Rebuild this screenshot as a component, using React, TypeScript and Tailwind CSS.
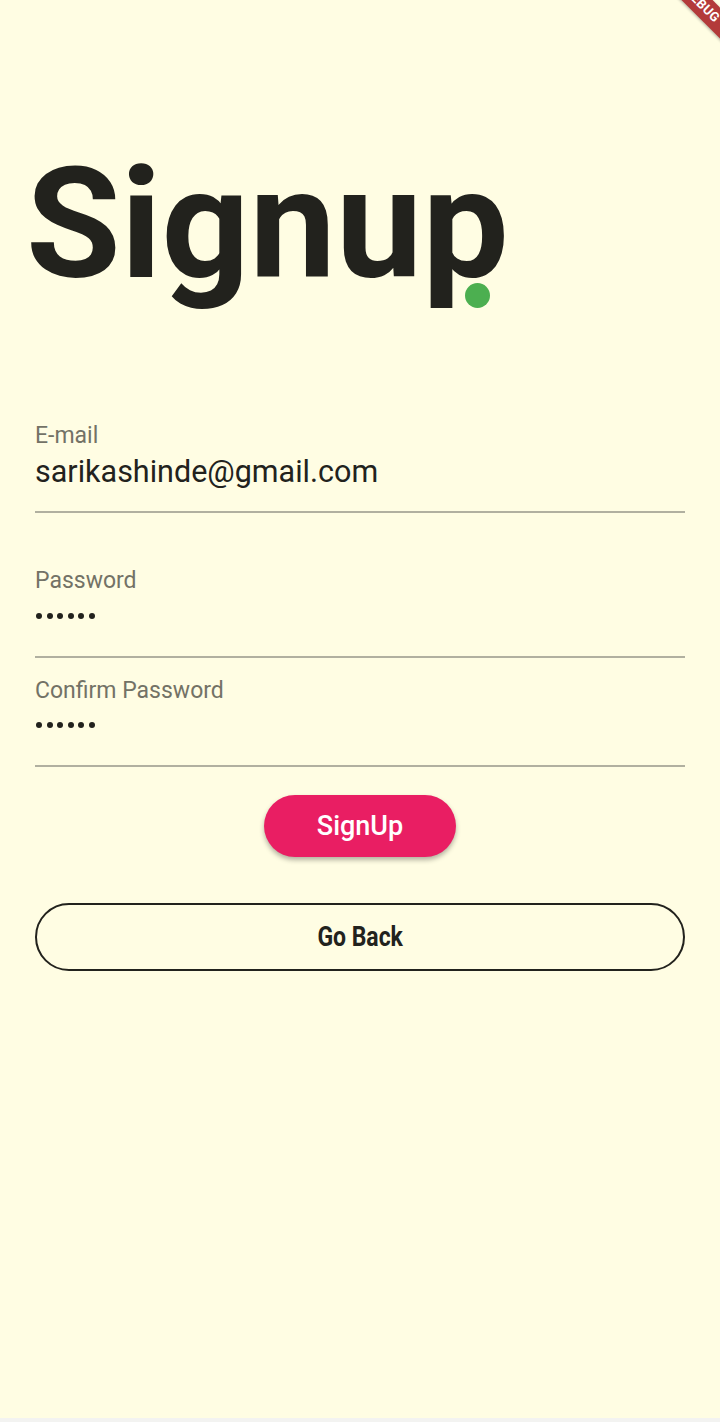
import React from "react";

function Label({ children }: { children: React.ReactNode }) {
  return <div className="text-[23px] leading-[28px] text-[#737266]">{children}</div>;
}

function Dots({ className }: { className: string }) {
  return (
    <div className={`flex gap-[4.5px] pl-[1px] ${className}`}>
      {Array.from({ length: 6 }).map((_, i) => (
        <span key={i} className="block w-[6px] h-[6px] rounded-full bg-[#22221d]" />
      ))}
    </div>
  );
}

function Line({ className }: { className: string }) {
  return <div className={`h-[2px] bg-[#b1b0a0] ${className}`} />;
}

export default function App() {
  return (
    <div
      className="relative w-[720px] h-[1422px] overflow-hidden bg-[#f3f3f1]"
      style={{ fontFamily: "Roboto, 'Noto Sans', sans-serif" }}
    >
      <div className="h-[1418px] bg-[#fffde3] flex flex-col px-[35px]">
        <div className="relative mt-[125px] h-[200px]">
          <h1 className="text-[154px] leading-[200px] font-bold text-[#22221d] -ml-[9px]">Signup</h1>
          <span className="absolute left-[430px] top-[158px] w-[25px] h-[25px] rounded-full bg-[#4caf50]" />
        </div>

        <div className="mt-[97px] flex flex-col">
          <Label>E-mail</Label>
          <div className="mt-[4px] text-[30.5px] leading-[36px] text-[#22221d]">sarikashinde@gmail.com</div>
          <Line className="mt-[21px]" />
        </div>

        <div className="mt-[54px] flex flex-col">
          <Label>Password</Label>
          <Dots className="mt-[18px]" />
          <Line className="mt-[37px]" />
        </div>

        <div className="mt-[19px] flex flex-col">
          <Label>Confirm Password</Label>
          <Dots className="mt-[17px]" />
          <Line className="mt-[37px]" />
        </div>

        <div className="flex justify-center mt-[28px]">
          <button className="w-[192px] h-[62px] rounded-full bg-[#e91e63] text-white text-[27px] font-medium shadow-[0_3px_5px_rgba(0,0,0,0.3)]">
            SignUp
          </button>
        </div>

        <button className="mt-[46px] h-[68px] w-full rounded-full border-2 border-[#22221d] flex items-center justify-center">
          <span className="inline-block text-[28px] font-bold text-[#22221d] scale-x-[0.82]">Go Back</span>
        </button>
      </div>

      <div className="absolute top-[-6px] right-[-42px] w-[120px] h-[22px] rotate-45 bg-[#b33a3a] shadow-[0_1px_3px_rgba(0,0,0,0.3)] flex items-center justify-center">
        <span className="text-white text-[13px] font-bold tracking-wide">DEBUG</span>
      </div>
    </div>
  );
}
